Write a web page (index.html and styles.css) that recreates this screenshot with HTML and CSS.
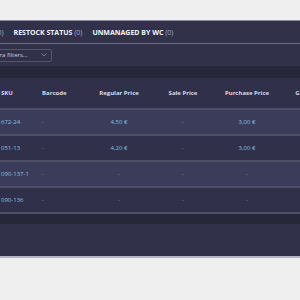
FILE: index.html
```html
<!DOCTYPE html>
<html lang="en">
<head>
<meta charset="utf-8"/>
<meta content="width=device-width, initial-scale=1.0" name="viewport"/>
<title>Stock Central</title>
<link rel="stylesheet" href="styles.css">
</head>
<body>
<div class="panel">
  <nav class="tabs">
    <a class="tab">Out of stock <span class="count">(0)</span></a>
    <a class="tab">Restock status <span class="count">(0)</span></a>
    <a class="tab">Unmanaged by WC <span class="count">(0)</span></a>
  </nav>
  <div class="filters">
    <div class="select">
      <span>Extra filters...</span>
      <svg class="chevron" width="6" height="4" viewBox="0 0 6 4"><path d="M0.5 0.5 L3 3 L5.5 0.5" fill="none" stroke="#8a8aa2" stroke-width="0.8"/></svg>
    </div>
  </div>
  <div class="table-wrap">
    <div class="table">
      <div class="row head">
        <div class="cell left">SKU</div>
        <div class="cell left pad">Barcode</div>
        <div class="cell">Regular Price</div>
        <div class="cell">Sale Price</div>
        <div class="cell">Purchase Price</div>
        <div class="cell">Gross Price</div>
      </div>
      <div class="row odd">
        <div class="cell left link">672-24</div>
        <div class="cell left pad dash">-</div>
        <div class="cell link">4,50 €</div>
        <div class="cell dash">-</div>
        <div class="cell link">3,00 €</div>
        <div class="cell dash">-</div>
      </div>
      <div class="row">
        <div class="cell left link">051-13</div>
        <div class="cell left pad dash">-</div>
        <div class="cell link">4,20 €</div>
        <div class="cell dash">-</div>
        <div class="cell link">3,00 €</div>
        <div class="cell dash">-</div>
      </div>
      <div class="row odd">
        <div class="cell left link">090-137-1</div>
        <div class="cell left pad dash">-</div>
        <div class="cell dash">-</div>
        <div class="cell dash">-</div>
        <div class="cell dash">-</div>
        <div class="cell dash">-</div>
      </div>
      <div class="row last">
        <div class="cell left link">090-136</div>
        <div class="cell left pad dash">-</div>
        <div class="cell dash">-</div>
        <div class="cell dash">-</div>
        <div class="cell dash">-</div>
        <div class="cell dash">-</div>
      </div>
    </div>
  </div>
  <div class="footer-space"></div>
</div>
</body>
</html>
```

FILE: styles.css
```css
/* Stock table, dark theme */
body {
    margin: 0;
    padding-top: 20px;
    background-color: #efefef;
    font-family: "Open Sans", "Noto Sans", sans-serif;
    overflow: hidden;
}

.panel {
    background-color: #31314a;
    border-top: 1px solid #8c8ca0;
    border-bottom: 2px solid #b4b6c8;
    overflow: hidden;
}

.tabs {
    display: flex;
    gap: 10px;
    height: 22px;
    align-items: center;
    margin-left: -57px;
    border-bottom: 1px solid #6c6c84;
}

.tab {
    color: #f2f2f8;
    font-size: 7px;
    font-weight: 700;
    text-transform: uppercase;
    white-space: nowrap;
}

.tab .count {
    color: #a8a8bc;
    font-weight: 400;
}

.filters {
    height: 22px;
    display: flex;
    align-items: center;
}

.select {
    width: 56px;
    height: 11px;
    margin-left: -10px;
    border: 1px solid #55556e;
    border-radius: 2px;
    display: flex;
    align-items: center;
    justify-content: space-between;
    padding: 0 4px 0 0;
    color: #d0d0e0;
    font-size: 6px;
    box-sizing: content-box;
}

.table-wrap {
    background-color: #27273a;
    padding: 12px 0 10px;
}

.row {
    display: grid;
    grid-template-columns: 36px 50px 66px 62px 66px 64px;
    height: 24px;
    align-items: center;
    background-color: #30304a;
    border-top: 2px solid #4f4f68;
    font-size: 6px;
}

.row.head {
    height: 30px;
    border-top: none;
    color: #d8d8e6;
    font-weight: 700;
}

.row.odd {
    background-color: #3b3b5a;
}

.row.last {
    border-bottom: 2px solid #4f4f68;
}

.cell {
    text-align: center;
    white-space: nowrap;
}

.cell.left {
    text-align: left;
    padding-left: 1px;
}

.cell.pad {
    padding-left: 6px;
}

.link {
    color: #86c2e0;
}

.dash {
    color: #9c9cb2;
}

.footer-space {
    height: 32px;
}
```
